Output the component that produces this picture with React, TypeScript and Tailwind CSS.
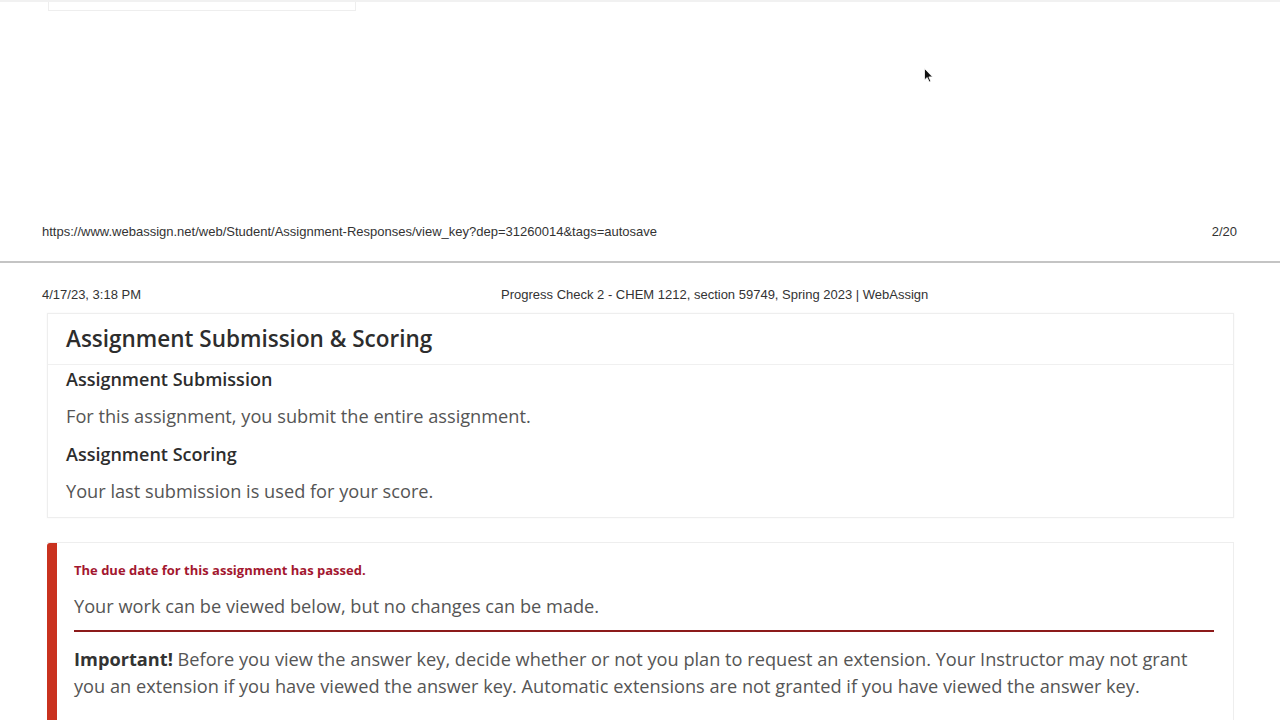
export default function App() {
  return (
    <div className="relative w-[1280px] h-[720px] overflow-hidden bg-white">
      {/* top remnant of previous page */}
      <div className="h-[212px] flex flex-col">
        <div className="h-[2px] bg-[#f1f1f1]" />
        <div className="ml-[48px] w-[308px] h-[9px] border-b border-x border-[#eeeeee]" />
      </div>
      <div className="h-[39px] px-[42px] flex items-center justify-between text-[13px] text-[#333] font-['Liberation_Sans',Arial,sans-serif]">
        <span>https://www.webassign.net/web/Student/Assignment-Responses/view_key?dep=31260014&amp;tags=autosave</span>
        <span className="mr-[1px]">2/20</span>
      </div>
      <div className="h-[12px] border-b-2 border-[#c4c4c4]" />
      <div className="h-[50px] px-[42px] pt-[24px] flex items-start text-[13px] leading-[15px] text-[#333] font-['Liberation_Sans',Arial,sans-serif]">
        <span className="w-[459px]">4/17/23, 3:18 PM</span>
        <span>Progress Check 2 - CHEM 1212, section 59749, Spring 2023 | WebAssign</span>
      </div>
      <div className="mx-[47px] w-[1187px] font-['Open_Sans',sans-serif] text-[#444]">
        <div className="border border-[#eeeeee] shadow-[0_0_2px_rgba(0,0,0,0.04)]">
          <div className="h-[51px] px-[18px] flex items-center border-b border-[#f0f0f0]">
            <h1 className="text-[22.5px] font-semibold text-[#2d2d2d]">Assignment Submission &amp; Scoring</h1>
          </div>
          <div className="px-[18px]">
            <div className="h-[28px] flex items-center text-[18px] font-semibold text-[#2d2d2d]">Assignment Submission</div>
            <div className="h-[48px] flex items-center text-[18.2px] text-[#555]">For this assignment, you submit the entire assignment.</div>
            <div className="h-[26px] flex items-center text-[18px] font-semibold text-[#2d2d2d]">Assignment Scoring</div>
            <div className="h-[50px] flex items-center text-[18.2px] text-[#555]">Your last submission is used for your score.</div>
          </div>
        </div>
        <div className="mt-[24px] flex border-y border-r border-[#eeeeee]">
          <div className="w-[10px] bg-[#c9321f] rounded-tl-[3px] shrink-0" />
          <div className="flex-1 pl-[17px] pr-[19px] pt-[18px] pb-[40px]">
            <div className="text-[13px] font-bold text-[#a3172f] leading-[18px]">The due date for this assignment has passed.</div>
            <div className="mt-[15px] text-[18.2px] text-[#555] leading-[24px]">Your work can be viewed below, but no changes can be made.</div>
            <div className="mt-[12px] h-[2px] bg-[#8c1a1a]" />
            <p className="mt-[14px] text-[18.2px] text-[#555] leading-[27px]">
              <span className="font-bold text-[#333]">Important!</span> Before you view the answer key, decide whether or not you plan to request an extension. Your Instructor may not grant you an extension if you have viewed the answer key. Automatic extensions are not granted if you have viewed the answer key.
            </p>
          </div>
        </div>
      </div>
      {/* mouse cursor */}
      <svg className="absolute left-[924px] top-[68px]" width="10" height="16" viewBox="0 0 10 16">
        <path d="M0.5 0.5 L0.5 12 L3.2 9.5 L5.2 14 L6.8 13.3 L4.9 8.9 L8.6 8.9 Z" fill="#111" stroke="#fff" strokeWidth="0.8" />
      </svg>
    </div>
  );
}
